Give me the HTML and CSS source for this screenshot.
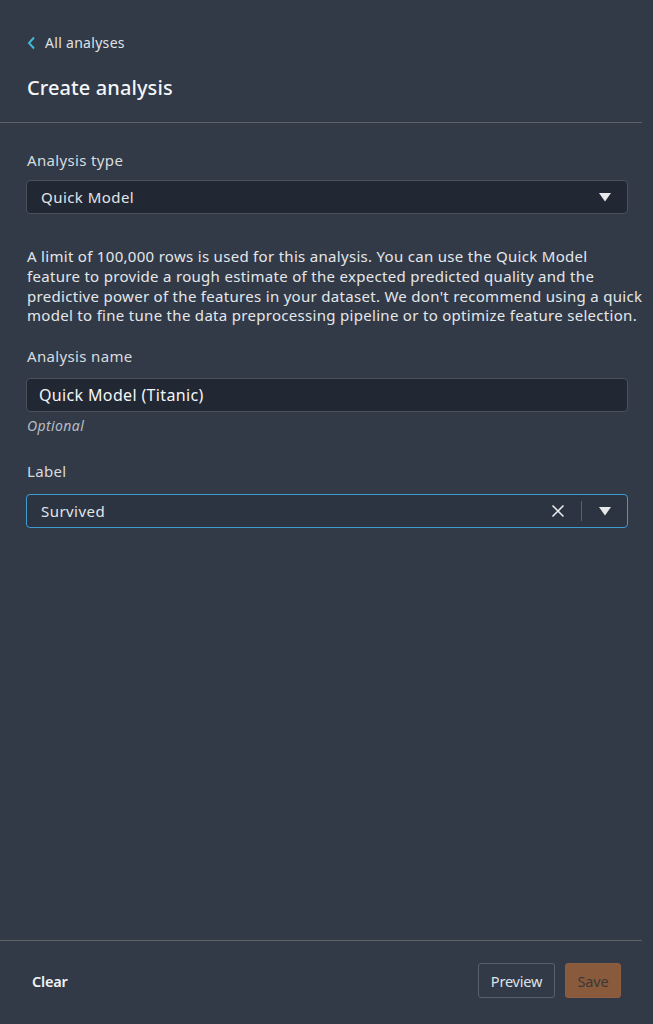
FILE: index.html
```html
<!DOCTYPE html>
<html>
<head>
<meta charset="utf-8">
<link rel="stylesheet" href="styles.css">
</head>
<body>
<div class="panel">
  <div class="header">
    <a class="back">
      <svg class="chev" width="9" height="14" viewBox="0 0 9 14"><path d="M7 1.5 L2 7 L7 12.5" fill="none" stroke="#44b9d6" stroke-width="2"/></svg>
      <span>All analyses</span>
    </a>
    <h1 class="title">Create analysis</h1>
  </div>
  <div class="body">
    <div class="field">
      <div class="label">Analysis type</div>
      <div class="select">
        <span class="value">Quick Model</span>
        <svg class="caret" width="12" height="10" viewBox="0 0 12 10"><path d="M0 1 H12 L6 9.5 Z" fill="#e6e8ea"/></svg>
      </div>
    </div>
    <p class="desc">A limit of 100,000 rows is used for this analysis. You can use the Quick Model<br>feature to provide a rough estimate of the expected predicted quality and the<br>predictive power of the features in your dataset. We don't recommend using a quick<br>model to fine tune the data preprocessing pipeline or to optimize feature selection.</p>
    <div class="field name-field">
      <div class="label">Analysis name</div>
      <div class="input"><span class="value bright">Quick Model (Titanic)</span></div>
      <div class="hint">Optional</div>
    </div>
    <div class="field label-field">
      <div class="label">Label</div>
      <div class="select focused">
        <span class="value">Survived</span>
        <svg class="clear-x" width="14" height="14" viewBox="0 0 14 14"><path d="M1.5 1.5 L12.5 12.5 M12.5 1.5 L1.5 12.5" stroke="#e6e8ea" stroke-width="1.6" fill="none"/></svg>
        <span class="divider"></span>
        <svg class="caret" width="12" height="10" viewBox="0 0 12 10"><path d="M0 1 H12 L6 9.5 Z" fill="#e6e8ea"/></svg>
      </div>
    </div>
  </div>
  <div class="footer">
    <button class="btn-link">Clear</button>
    <div class="actions">
      <button class="btn-normal">Preview</button>
      <button class="btn-primary">Save</button>
    </div>
  </div>
</div>
</body>
</html>
```

FILE: styles.css
```css
* { box-sizing: border-box; }
html, body { margin: 0; padding: 0; }
body {
  background: #323a48;
  font-family: "Noto Sans", "Open Sans", sans-serif;
  color: #e6e8ea;
  width: 653px;
  height: 1024px;
  overflow: hidden;
}
.panel {
  width: 642px;
  height: 1024px;
  display: flex;
  flex-direction: column;
}
.header {
  padding: 33px 0 0 27px;
  height: 123px;
  border-bottom: 1px solid #5f6368;
  flex: none;
}
.back {
  display: flex;
  align-items: center;
  gap: 9px;
  font-size: 14px;
  line-height: 20px;
  color: #dfe2e5;
  height: 20px;
  letter-spacing: 0.3px;
}
.title {
  margin: 22px 0 0 0;
  font-size: 20px;
  font-weight: 500;
  color: #f4f5f6;
  line-height: 26px;
  letter-spacing: 0.1px;
}
.body {
  flex: 1;
  padding: 27px 0 0 26px;
}
.field { display: flex; flex-direction: column; margin-right: 14px; }
.label {
  font-size: 15px;
  color: #d8dcdf;
  line-height: 20px;
  padding-left: 1px;
  margin-bottom: 10px;
  letter-spacing: 0.35px;
}
.select, .input {
  height: 34px;
  border: 1px solid #4c525b;
  background: #222833;
  border-radius: 4px;
  display: flex;
  align-items: center;
  padding: 0 16px 0 14px;
}
.input { padding-left: 12px; }
.value { font-size: 15px; color: #e2e5e8; flex: 1; letter-spacing: 0.45px; }
.value.bright { color: #f5f6f7; font-size: 16px; letter-spacing: 0.35px; }
.caret { display: block; }
.desc {
  margin: 33px -11px 0 1px;
  font-size: 15px;
  line-height: 19.8px;
  color: #e4e7ea;
  letter-spacing: 0.3px;
  white-space: nowrap;
}
.name-field { margin-top: 20px; }
.name-field .label { margin-bottom: 12px; }
.hint {
  font-style: italic;
  font-size: 14px;
  color: #b8bdc3;
  margin-top: 4px;
  padding-left: 1px;
  line-height: 20px;
  letter-spacing: 0.4px;
}
.label-field { margin-top: 25px; }
.label-field .label { margin-bottom: 13px; }
.select.focused {
  background: #2c3442;
  border-color: #3d9cd0;
}
.clear-x { margin-right: 16px; }
.divider {
  width: 1px;
  height: 20px;
  background: #5a616b;
  margin-right: 17px;
}
.footer {
  height: 84px;
  border-top: 1px solid #5f6368;
  display: flex;
  align-items: center;
  justify-content: space-between;
  padding: 0 21px 4px 32px;
  flex: none;
}
button {
  font-family: inherit;
  font-size: 14.5px;
  cursor: pointer;
  letter-spacing: -0.2px;
}
.btn-link {
  background: none;
  border: none;
  color: #f2f3f4;
  font-weight: 600;
  padding: 0;
}
.actions { display: flex; gap: 10px; }
.btn-normal {
  height: 35px;
  width: 77px;
  background: transparent;
  border: 1px solid #59606b;
  border-radius: 3px;
  color: #dfe2e5;
  padding: 0;
}
.btn-primary {
  height: 35px;
  width: 56px;
  background: #8a5a3d;
  border: 1px solid #8e5e40;
  border-radius: 3px;
  color: #3a3836;
  padding: 0;
}
```
